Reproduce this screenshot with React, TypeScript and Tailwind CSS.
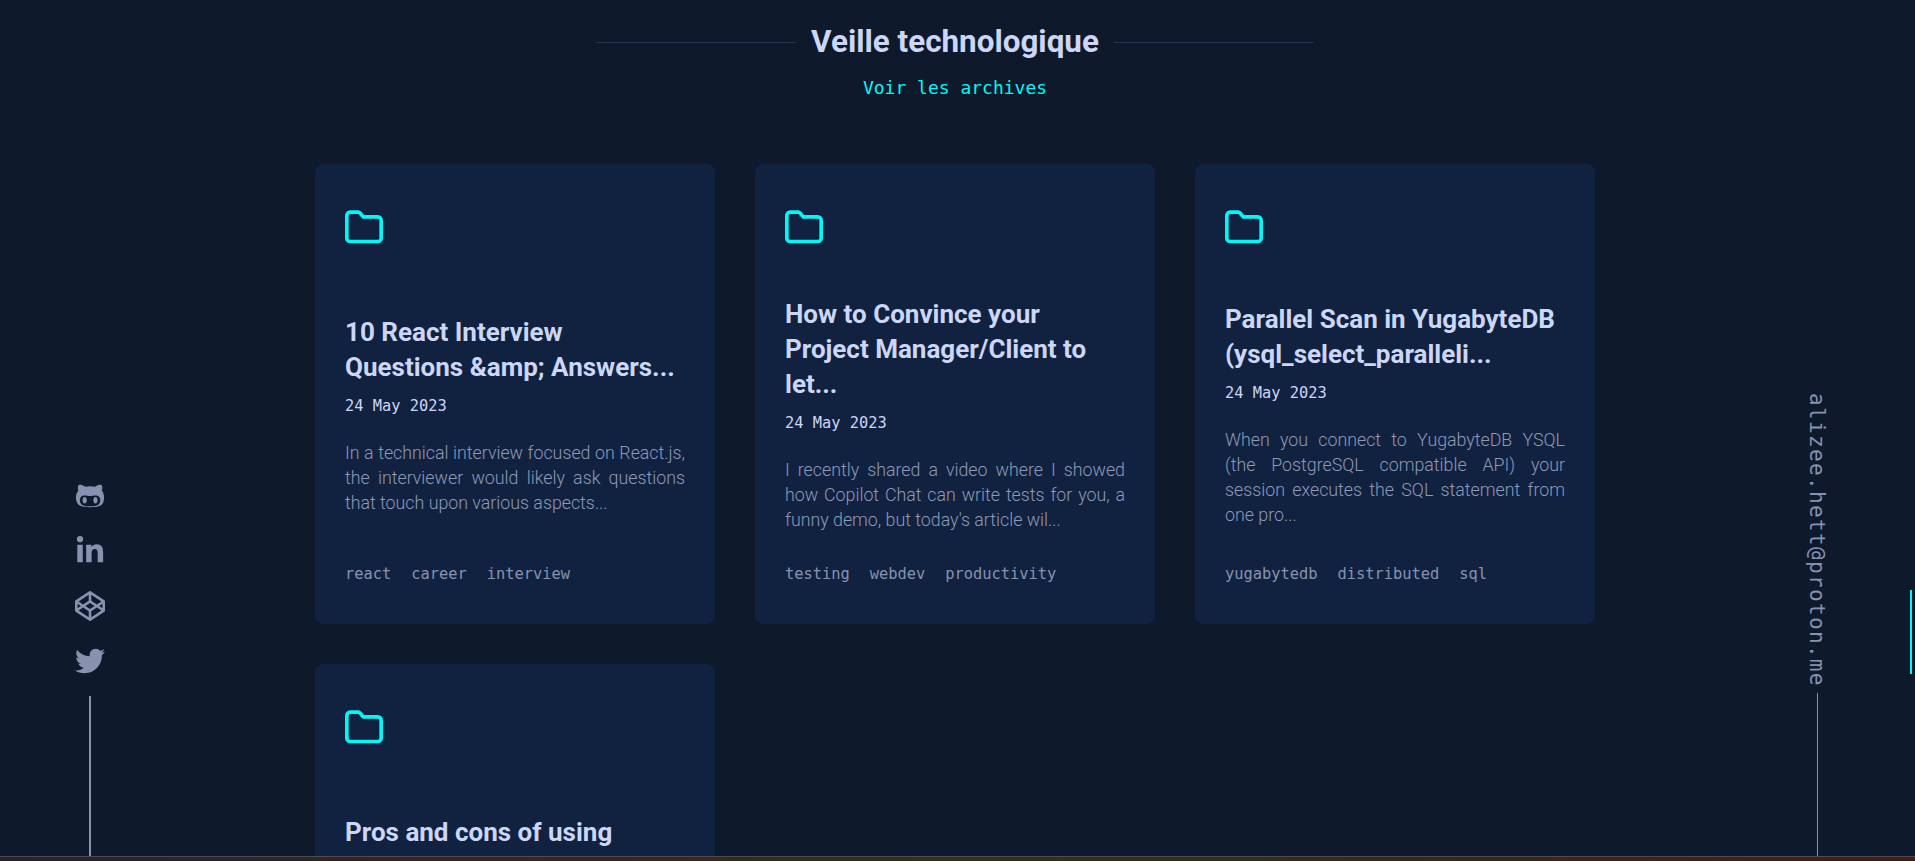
import React from 'react';
import { FaGithubAlt, FaLinkedinIn, FaCodepen, FaTwitter } from 'react-icons/fa';

const posts = [
  {
    title: '10 React Interview Questions &amp; Answers...',
    date: '24 May 2023',
    text: 'In a technical interview focused on React.js, the interviewer would likely ask questions that touch upon various aspects...',
    tags: ['react', 'career', 'interview'],
  },
  {
    title: 'How to Convince your Project Manager/Client to let...',
    date: '24 May 2023',
    text: "I recently shared a video where I showed how Copilot Chat can write tests for you, a funny demo, but today's article wil...",
    tags: ['testing', 'webdev', 'productivity'],
  },
  {
    title: 'Parallel Scan in YugabyteDB (ysql_select_paralleli...',
    date: '24 May 2023',
    text: 'When you connect to YugabyteDB YSQL (the PostgreSQL compatible API) your session executes the SQL statement from one pro...',
    tags: ['yugabytedb', 'distributed', 'sql'],
  },
  {
    title: 'Pros and cons of using TypeScript in your project...',
    date: '24 May 2023',
    text: 'TypeScript brings static typing to JavaScript, which has benefits and some costs you should weigh before adopting it...',
    tags: ['typescript', 'javascript', 'webdev'],
  },
];

function FolderIcon() {
  return (
    <svg viewBox="0 0 24 24" fill="none" stroke="currentColor" strokeWidth="2.2" strokeLinecap="round" strokeLinejoin="round" className="-ml-px h-10 w-10 text-[#00f8f8]">
      <path d="M22.3 18.7a2 2 0 0 1-2 2H3.7a2 2 0 0 1-2-2V5.1a2 2 0 0 1 2-2h4.6a2 2 0 0 1 1.6.8l1.6 2h8.8a2 2 0 0 1 2 2z" />
    </svg>
  );
}

function Card({ post }: { post: (typeof posts)[number] }) {
  return (
    <article className="flex h-[460px] flex-col justify-between rounded-lg bg-[#112240] px-[30px] pt-[43px] pb-[39px]">
      <header className="h-[59px]">
        <FolderIcon />
      </header>

      <div>
        <h3 className="text-[26px] leading-[35px] font-bold text-[#ccd6f6]">{post.title}</h3>
        <p className="mt-[10px] font-['DejaVu_Sans_Mono',monospace] text-[15.36px] leading-[22px] text-[#ccd6f6]">{post.date}</p>
        <p className="mt-[23px] text-justify text-[17.8px] leading-[25px] font-light text-[#8f99b8]">{post.text}</p>
      </div>

      <ul className="flex gap-5 font-['DejaVu_Sans_Mono',monospace] text-[15.36px] leading-[22px] text-[#8892b0]">
        {post.tags.map((tag) => (
          <li key={tag}>{tag}</li>
        ))}
      </ul>
    </article>
  );
}

export default function App() {
  return (
    <div className="relative h-[861px] overflow-hidden bg-[#0e1a2c] font-['Roboto',sans-serif]">
      <main className="mr-[5px] pt-[21px]">
        {/* Section title */}
        <div className="flex items-center justify-center gap-[15px]">
          <span className="h-px w-[200px] bg-[#233554]" />
          <h2 className="text-[31.4px] leading-[42px] font-bold text-[#ccd6f6]">Veille technologique</h2>
          <span className="h-px w-[200px] bg-[#233554]" />
        </div>
        <p className="mt-[12px] text-center font-['DejaVu_Sans_Mono',monospace] text-[18px] leading-[26px] text-[#00f8f8]">Voir les archives</p>

        {/* Posts */}
        <div className="mx-auto mt-[63px] grid w-[1280px] grid-cols-3 gap-10">
          {posts.map((post) => (
            <Card key={post.title} post={post} />
          ))}
        </div>
      </main>

      {/* Socials */}
      <div className="absolute top-[468px] bottom-0 left-[70px] flex w-10 flex-col items-center text-[#8892b0]">
        <a className="flex h-[55px] items-center"><FaGithubAlt size={30} /></a>
        <a className="flex h-[55px] items-center"><FaLinkedinIn size={30} /></a>
        <a className="flex h-[55px] items-center"><FaCodepen size={30} /></a>
        <a className="flex h-[55px] items-center"><FaTwitter size={30} /></a>
        <span className="mt-[8px] w-[2px] flex-1 bg-[#8892b0]" />
      </div>

      {/* Email */}
      <div className="absolute top-[393px] right-[78px] bottom-0 flex w-10 flex-col items-center">
        <a className="font-['DejaVu_Sans_Mono',monospace] text-[21px] leading-[24px] tracking-[1.35px] text-[#8892b0] [writing-mode:vertical-rl]">alizee.hett@proton.me</a>
        <span className="mt-[6px] w-px flex-1 bg-[#8892b0]" />
      </div>

      {/* Scroll thumb */}
      <div className="absolute top-[590px] right-[3px] h-[84px] w-[2px] bg-[#00f8f8]" />

      {/* Bottom strip */}
      <div className="absolute inset-x-0 bottom-0 h-[5px] border-t border-[#4a4a50] bg-gradient-to-r from-[#2f1f2b] via-[#33301c] to-[#3d1f1c]" />
    </div>
  );
}
